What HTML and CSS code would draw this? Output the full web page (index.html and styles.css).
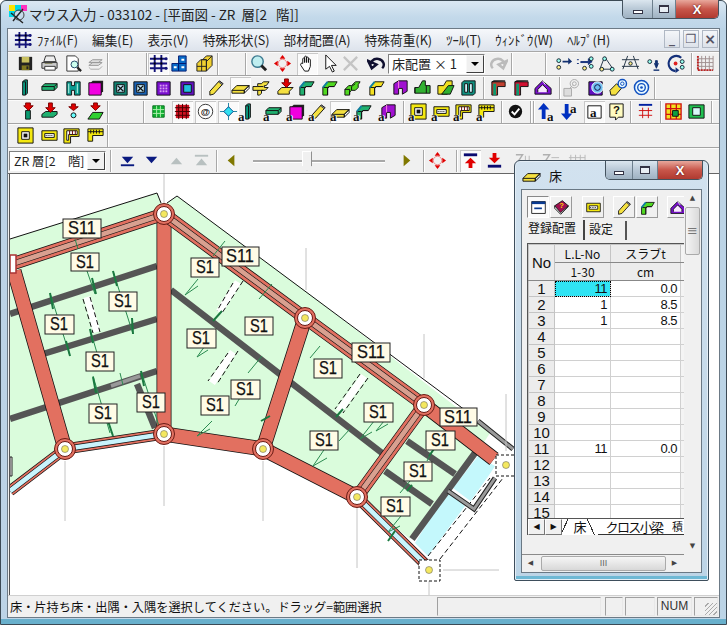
FILE: index.html
```html
<!DOCTYPE html>
<html lang="ja">
<head>
<meta charset="utf-8">
<title>マウス入力</title>
<link rel="stylesheet" href="styles.css">
</head>
<body>
<svg class="defs" width="0" height="0">
<defs>
<symbol id="appgrid" viewBox="0 0 20 20"><path d="M6 1v18M13 1v18M1 5h18M1 10h18M1 15h18" stroke="#14147a" stroke-width="2" fill="none"/><path d="M5 4h2v2H5zM12 4h2v2h-2zM5 9h2v2H5zM12 9h2v2h-2z" fill="#000"/><circle cx="18" cy="5" r="1.6" fill="#14147a"/><circle cx="18" cy="15" r="1.6" fill="#14147a"/></symbol>
<symbol id="floppy" viewBox="0 0 20 20"><path d="M3 3h14v14H3z" fill="#222"/><path d="M6 3h8v6H6z" fill="#c8c060"/><path d="M6 12h8v5H6z" fill="#807820"/><path d="M11 13h2v3h-2z" fill="#222"/></symbol>
<symbol id="print" viewBox="0 0 20 20"><path d="M6 2h9l2 6H4z" fill="#eee" stroke="#333"/><path d="M2 9h16v6H2z" fill="#ccc" stroke="#333"/><path d="M5 13h11v4H5z" fill="#fff" stroke="#333"/><path d="M5 10h8" stroke="#886" /></symbol>
<symbol id="preview" viewBox="0 0 20 20"><path d="M3 2h9l3 3v13H3z" fill="#fff" stroke="#333"/><circle cx="11" cy="11" r="3.6" fill="#cfe" stroke="#246"/><path d="M14 14l4 4" stroke="#222" stroke-width="2.4"/></symbol>
<symbol id="layers" viewBox="0 0 20 20"><path d="M3 12l4-3h10l-4 3zM3 9l4-3h10l-4 3z" fill="#ddd" stroke="#999"/><path d="M3 14l2 2h9l3-3" fill="none" stroke="#aaa"/></symbol>
<symbol id="steps" viewBox="0 0 20 20"><path d="M2 10h7v8H2zM9 10h8v8H9zM9 2h8v8H9z" fill="#0a6cc8" stroke="#001a70"/><path d="M4 13h3v2H4zM12 5h3v2h-3zM12 13h3v2h-3z" fill="#fff"/></symbol>
<symbol id="cubes" viewBox="0 0 20 20"><path d="M2 10l4-4h6v12H2zM8 6l4-4h6v10l-6 6V6z" fill="#f0d030" stroke="#222"/><path d="M2 13h10M7 6v12M12 8l6-6" stroke="#222" fill="none"/></symbol>
<symbol id="mag" viewBox="0 0 20 20"><circle cx="9" cy="8" r="6" fill="#bfeef0" stroke="#3c7a90" stroke-width="1.5"/><path d="M13 12l5 5" stroke="#222" stroke-width="3"/></symbol>
<symbol id="move" viewBox="0 0 20 20"><path d="M10 1l3 4H7zM10 19l-3-4h6zM1 10l4-3v6zM19 10l-4 3V7z" fill="#e00000"/><circle cx="10" cy="10" r="4.5" fill="none" stroke="#f08080"/></symbol>
<symbol id="hand" viewBox="0 0 20 20"><path d="M5 10V5c0-1 2-1 2 0v4V3c0-1 2-1 2 0v6V4c0-1 2-1 2 0v5V6c0-1 2-1 2 0v7l-2 5H7L3 12c-1-2 1-3 2-2z" fill="#fff" stroke="#111"/></symbol>
<symbol id="cursor" viewBox="0 0 20 20"><path d="M5 1v15l4-3 3 6 2-1-3-6h5z" fill="#fff" stroke="#111"/></symbol>
<symbol id="xx" viewBox="0 0 20 20"><path d="M3 3l14 14M17 3L3 17" stroke="#c4c4c4" stroke-width="2.4"/></symbol>
<symbol id="undo" viewBox="0 0 20 20"><path d="M4 13A7 6 0 1 1 16 15M1 7l4 8 5-4z" fill="none" stroke="#101030" stroke-width="2.6"/></symbol>
<symbol id="redo" viewBox="0 0 20 20"><path d="M16 13A7 6 0 1 0 4 15M19 7l-4 8-5-4z" fill="none" stroke="#bbb" stroke-width="2.6"/></symbol>
<symbol id="dot1" viewBox="0 0 20 20"><circle cx="5" cy="7" r="2" fill="#9fe" stroke="#123"/><circle cx="5" cy="14" r="2" fill="#fe8" stroke="#123"/><path d="M9 7h6V4l4 4-4 3V9H9z" fill="#123070"/></symbol>
<symbol id="dot2" viewBox="0 0 20 20"><path d="M1 6h2M1 10h2M5 8h8V5l4 3-4 3v-2H5z" fill="#14307a" stroke="#14307a"/><circle cx="16" cy="5" r="2" fill="#9fe" stroke="#123"/><circle cx="9" cy="15" r="2" fill="#fe8" stroke="#123"/><circle cx="16" cy="13" r="2" fill="#9fe" stroke="#123"/></symbol>
<symbol id="tri" viewBox="0 0 20 20"><path d="M8 3l9 13H3z" fill="none" stroke="#234"/><circle cx="8" cy="5" r="2" fill="#9fe" stroke="#123"/><circle cx="5" cy="16" r="2" fill="#fe8" stroke="#123"/><circle cx="16" cy="16" r="2" fill="#9fe" stroke="#123"/></symbol>
<symbol id="star" viewBox="0 0 20 20"><path d="M7 2L2 16M13 2l5 14M1 6h18M1 13h18" stroke="#234" fill="none"/><circle cx="10" cy="10" r="1.8" fill="#fe8" stroke="#123"/></symbol>
<symbol id="dotdn" viewBox="0 0 20 20"><circle cx="5" cy="8" r="2" fill="#9fe" stroke="#123"/><path d="M10 10h1V7h2v3h1l-2 5z" fill="#123070" stroke="#123070"/><path d="M9 17h6" stroke="#123070" stroke-width="1.5"/></symbol>
<symbol id="spin" viewBox="0 0 20 20"><path d="M15 4A8 8 0 1 0 9 18" fill="none" stroke="#14307a" stroke-width="2.2"/><path d="M9 14v6l4-3z" fill="#14307a"/><circle cx="9" cy="10" r="2" fill="#e02020"/><circle cx="16" cy="8" r="2" fill="#9fe" stroke="#123"/><circle cx="16" cy="14" r="2" fill="#9fe" stroke="#123"/></symbol>
<symbol id="redgrid" viewBox="0 0 20 20"><path d="M2 2v15h16M6 2v15M10 2v15M14 2v15M18 2v15M2 5h16M2 9h16M2 13h16" fill="none" stroke="#a09090"/><path d="M2 2v15h16" fill="none" stroke="#c02020" stroke-width="2" stroke-dasharray="2 1"/></symbol>
<symbol id="col" viewBox="0 0 20 20"><path d="M7 4l2-2h3v14l-2 2H7z" fill="currentColor" stroke="#111"/><path d="M7 4h3v14" fill="none" stroke="#111"/></symbol>
<symbol id="bar" viewBox="0 0 20 20"><path d="M2 9l3-3h13v4l-3 3H2z" fill="currentColor" stroke="#111"/><path d="M2 9h13v4M15 9l3-3" fill="none" stroke="#111"/></symbol>
<symbol id="hcol" viewBox="0 0 20 20"><path d="M3 4h5v4h3V4h6v14h-6v-5H8v5H3z" fill="#0a9a90" stroke="#111"/><path d="M5 6v10M14 6v10" stroke="#cfe"/></symbol>
<symbol id="sq" viewBox="0 0 20 20"><path d="M4 6l3-3h11v11l-3 3H4z" fill="#222"/><path d="M3 5h13v13H3z" fill="#f000e0" stroke="#111"/></symbol>
<symbol id="boxx" viewBox="0 0 20 20"><path d="M3 4h14v14H3z" fill="currentColor" stroke="#111"/><path d="M6 7h8v8H6z" fill="#bfe8f8" stroke="#111"/><path d="M7 8l6 6M13 8l-6 6" stroke="#111" stroke-width="1.4"/></symbol>
<symbol id="boxg" viewBox="0 0 20 20"><path d="M3 4h14v14H3z" fill="#7a10d0" stroke="#111"/><path d="M6 7h8v8H6z" fill="#d8a0f0"/><path d="M8.5 5v12M11.5 5v12M4 9.500h12M4 12.500h12" stroke="#7a10d0"/></symbol>
<symbol id="boxc" viewBox="0 0 20 20"><path d="M3 4h14v14H3z" fill="#6010c0" stroke="#111"/><path d="M6 7h8v8H6z" fill="#20c0e0" stroke="#111"/></symbol>
<symbol id="pencil" viewBox="0 0 20 20"><path d="M3 14l9-10 4 3-9 10-4 1z" fill="#f4e040" stroke="#111"/><path d="M12 4l1-1 4 3-1 1" fill="#888" stroke="#111"/></symbol>
<symbol id="slab" viewBox="0 0 20 20"><path d="M1 13l5-5h13l-5 5v3H1z" fill="#f4e040" stroke="#111"/><path d="M1 13h13l5-5M14 13v3l5-5V8" fill="none" stroke="#111"/></symbol>
<symbol id="cross" viewBox="0 0 20 20"><path d="M1 9h5V6h4l2-2h6l-3 4h-2v2h4l-3 3h-4v3l-2 2H6v-5H1z" fill="#f4e040" stroke="#111"/><path d="M6 9h6M6 13h6" fill="none" stroke="#111"/></symbol>
<symbol id="slabd" viewBox="0 0 20 20"><path d="M2 14l4-4h12l-4 4v3H2z" fill="#f4e040" stroke="#111"/><path d="M9 1h4v4h3l-5 5-5-5h3z" fill="#e00000" stroke="#700"/></symbol>
<symbol id="ell" viewBox="0 0 20 20"><path d="M3 10l5-6h10l-3 5H9l-1 2v7H3z" fill="currentColor" stroke="#111"/><path d="M3 10h5v8M8 11l2-2h5" fill="none" stroke="#111"/><path d="M3 10l5-6" stroke="#1080a0" stroke-width="2"/></symbol>
<symbol id="ell2" viewBox="0 0 20 20"><path d="M2 12l4-4h3l4-4h5l-2 3v3l-3 3H9l-2 2v3H2z" fill="currentColor" stroke="#111"/><path d="M2 12h5v5M9 13V9l4-3" fill="none" stroke="#111"/></symbol>
<symbol id="purp" viewBox="0 0 20 20"><path d="M3 6l5-3h9v11l-5 3v-6H8v6H3z" fill="#a010d0" stroke="#111"/><path d="M8 3v8" stroke="#f8d"/></symbol>
<symbol id="thumb" viewBox="0 0 20 20"><path d="M2 10h4l4-7h3v5h5v8H2z" fill="#30b030" stroke="#111"/><path d="M2 10v6M14 8v8" stroke="#111"/></symbol>
<symbol id="ygl" viewBox="0 0 20 20"><path d="M2 8h6l3-5h6v8l-5 6H2z" fill="#f0e020" stroke="#111"/><path d="M6 17l7-9h6l-4 9z" fill="#30b030" stroke="#111"/></symbol>
<symbol id="gbox" viewBox="0 0 20 20"><path d="M3 5l2-2h12v13l-2 2H3z" fill="#109080" stroke="#111"/><path d="M6 6h3v9H6zM11 6h3v9h-3z" fill="#d0f0f8" stroke="#111"/></symbol>
<symbol id="lred" viewBox="0 0 20 20"><path d="M3 4h14v5h-8v9H3z" fill="currentColor" stroke="#111"/><path d="M3 4l2-1h12" stroke="#111"/><path d="M6 6v12" stroke="#0a9a70" stroke-width="3"/></symbol>
<symbol id="roof" viewBox="0 0 20 20"><path d="M1 17V11L9 3l9 8v6z" fill="#7a10d0" stroke="#111"/><path d="M4 15v-3l5-5 5 5v3" fill="#f8e8ff" stroke="#111"/><path d="M9 3l3 4" stroke="#fff"/></symbol>
<symbol id="spgrey" viewBox="0 0 20 20"><path d="M2 11h8v8H2zM8 11l3-3" fill="#ddd" stroke="#aaa"/><circle cx="13" cy="6" r="4.4" fill="none" stroke="#aaa"/><circle cx="13" cy="6" r="2" fill="none" stroke="#aaa"/></symbol>
<symbol id="spbox" viewBox="0 0 20 20"><path d="M2 4h14v14H2z" fill="#6010c0" stroke="#111"/><circle cx="11" cy="10" r="6" fill="#70c0f0" stroke="#fff"/><circle cx="11" cy="10" r="3" fill="none" stroke="#114"/></symbol>
<symbol id="sppen" viewBox="0 0 20 20"><path d="M1 13l7-7 5 5-6 7H2z" fill="#f4e040" stroke="#111"/><circle cx="14" cy="6" r="4.4" fill="#e8f8ff" stroke="#1050c0" stroke-width="1.5"/><circle cx="14" cy="6" r="1.8" fill="none" stroke="#1050c0"/></symbol>
<symbol id="spiral" viewBox="0 0 20 20"><circle cx="10" cy="10" r="7.4" fill="#e8f8ff" stroke="#1050c0" stroke-width="1.6"/><circle cx="10" cy="10" r="4" fill="none" stroke="#1050c0" stroke-width="1.4"/><circle cx="10" cy="10" r="1.4" fill="#1050c0"/></symbol>
<symbol id="colr" viewBox="0 0 20 20"><path d="M8 9h5v9H8z" fill="#0a9a70" stroke="#111"/><path d="M8 1h5v3h3l-5 5-5-5h2z" fill="#e00000" stroke="#700"/></symbol>
<symbol id="barr" viewBox="0 0 20 20"><path d="M2 13l4-3h12v3l-4 3H2z" fill="#20b070" stroke="#111"/><path d="M9 1h4v5h3l-5 5-5-5h3z" fill="#e00000" stroke="#700"/></symbol>
<symbol id="dotr" viewBox="0 0 20 20"><path d="M8 2h4v3h3l-5 4-5-4h3z" fill="#e00000" stroke="#700"/><circle cx="10" cy="14" r="2.600" fill="#6ff" stroke="#111"/></symbol>
<symbol id="parar" viewBox="0 0 20 20"><path d="M2 18l5-7h11l-4 7z" fill="#30d030" stroke="#111"/><path d="M8 1h4v3h3l-5 5-5-5h3z" fill="#e00000" stroke="#700"/></symbol>
<symbol id="gtile" viewBox="0 0 20 20"><path d="M4 4h12v12H4z" fill="#10b030" stroke="#0a7020"/><path d="M8 4v12M12 4v12M4 8h12M4 12h12" stroke="#b0f0b0"/></symbol>
<symbol id="hash" viewBox="0 0 20 20"><path d="M3 3h14v14H3z" fill="#d01020"/><path d="M6 2v16M10 2v16M14 2v16M2 6h16M2 10h16M2 14h16" stroke="#400" /></symbol>
<symbol id="at" viewBox="0 0 20 20"><circle cx="10" cy="10" r="7.600" fill="#fff" stroke="#333"/><text x="10" y="14" class="att">@</text></symbol>
<symbol id="cyc" viewBox="0 0 20 20"><path d="M1 10h18M10 1v18" stroke="#2080a0"/><path d="M10 5l5 5-5 5-5-5z" fill="#30e0f0" stroke="#048"/></symbol>
<symbol id="f1" viewBox="0 0 20 20"><path d="M2 2h16v16H2z" fill="#f4e810" stroke="#111"/><path d="M6 6h8v8H6z" fill="#fff" stroke="#111"/><path d="M8 8h4v4H8z" fill="#111"/></symbol>
<symbol id="f2" viewBox="0 0 20 20"><path d="M2 5h16v10H2z" fill="#f4e810" stroke="#111"/><path d="M5 8h10v4H5z" fill="#fff" stroke="#111"/><path d="M6 10h8" stroke="#111" stroke-dasharray="1 1"/></symbol>
<symbol id="f3" viewBox="0 0 20 20"><path d="M2 3h16v8h-9v7H2z" fill="#f4e810" stroke="#111"/><path d="M5 5h11v4H7v6H5z" fill="#fff" stroke="#111"/><path d="M8 5v4M11 5v4M14 5v4" stroke="#600"/></symbol>
<symbol id="f4" viewBox="0 0 20 20"><path d="M2 3h16v7H7v6H2z" fill="#f4e810" stroke="#111"/><path d="M2 6h16" stroke="#111"/><path d="M5 4v4M8 4v4M11 4v4M14 4v4" stroke="#111"/></symbol>
<symbol id="check" viewBox="0 0 20 20"><circle cx="10" cy="10" r="7" fill="#111"/><path d="M6 10l3 3 5-6" fill="none" stroke="#fff" stroke-width="2"/></symbol>
<symbol id="upa" viewBox="0 0 20 20"><path d="M7 1l6 7H9v10H5V8H1z" fill="#0030c0"/></symbol>
<symbol id="dna" viewBox="0 0 20 20"><path d="M5 2h4v10h4l-6 7-6-7h4z" fill="#0030c0"/></symbol>
<symbol id="abox" viewBox="0 0 20 20"><path d="M3 4h14v13H3z" fill="#fff" stroke="#111"/></symbol>
<symbol id="qbox" viewBox="0 0 20 20"><path d="M3 2h14v14h-5l-3 3v-3H3z" fill="#fffbc0" stroke="#111"/><text x="10" y="13" class="q">?</text></symbol>
<symbol id="rline" viewBox="0 0 20 20"><path d="M3 3h14" stroke="#0020a0" stroke-width="2"/><path d="M3 9h14M3 14h14M7 6v11M13 6v11" stroke="#d01010"/></symbol>
<symbol id="rygrid" viewBox="0 0 20 20"><path d="M2 2h16v16H2z" fill="#f0e020"/><path d="M2 2h16v16H2zM7 2v16M13 2v16M2 7h16M2 13h16" fill="none" stroke="#d01010" stroke-width="1.4"/><path d="M9 9h6v6H9z" fill="#10a040" stroke="#111"/></symbol>
<symbol id="gframe" viewBox="0 0 20 20"><path d="M2 3h16v14H2z" fill="#20c050" stroke="#111"/><path d="M6 6h8v8H6z" fill="#d8f8f8" stroke="#111"/></symbol>
<symbol id="lvup" viewBox="0 0 20 20"><path d="M3 4h14" stroke="#0a0a70" stroke-width="3"/><path d="M10 7l6 6h-4v5H8v-5H4z" fill="#e00000"/></symbol>
<symbol id="lvdn" viewBox="0 0 20 20"><path d="M3 16h14" stroke="#0a0a70" stroke-width="3"/><path d="M8 2h4v5h4l-6 6-6-6h4z" fill="#e00000"/></symbol>
<symbol id="tdb" viewBox="0 0 20 20"><path d="M4 6h12l-6 7z" fill="currentColor"/><path d="M3 15h14" stroke="currentColor" stroke-width="2"/></symbol>
<symbol id="td" viewBox="0 0 20 20"><path d="M4 6h12l-6 7z" fill="currentColor"/></symbol>
<symbol id="tu" viewBox="0 0 20 20"><path d="M4 14h12l-6-7z" fill="currentColor"/></symbol>
<symbol id="tub" viewBox="0 0 20 20"><path d="M4 15h12l-6-7z" fill="currentColor"/><path d="M3 5h14" stroke="currentColor" stroke-width="2"/></symbol>
<symbol id="tl" viewBox="0 0 20 20"><path d="M13 4v12L6 10z" fill="currentColor"/></symbol>
<symbol id="tr" viewBox="0 0 20 20"><path d="M7 4v12l7-6z" fill="currentColor"/></symbol>
<symbol id="fad1" viewBox="0 0 20 20"><path d="M2 4h7L5 10l4 6H2" fill="none" stroke="#b0b0b0" stroke-width="1.500"/><path d="M12 5v11M16 5v11" stroke="#b8b8b8"/></symbol>
<symbol id="fad2" viewBox="0 0 20 20"><path d="M2 4h7L5 10l4 6H2" fill="none" stroke="#b0b0b0" stroke-width="1.500"/><path d="M11 7h8M11 12h8" stroke="#b8b8b8"/></symbol>
<symbol id="fad3" viewBox="0 0 20 20"><path d="M4 4v12M9 4v12M14 4v12M19 4v12M2 7h17" stroke="#b8b8b8"/></symbol>
<symbol id="cal" viewBox="0 0 20 20"><path d="M2 3h16v14H2z" fill="#fff" stroke="#111"/><path d="M2 3h16v3H2z" fill="#0a3a90"/><path d="M5 11h9" stroke="#0a3a90" stroke-width="2"/></symbol>
<symbol id="book" viewBox="0 0 20 20"><path d="M2 8l9-6 7 6-9 9z" fill="#a01050" stroke="#111"/><path d="M2 8v3l7 7 9-9V8L9 16z" fill="#eee" stroke="#111"/><text x="10" y="11" class="q2">?</text></symbol>
</defs>
</svg>

<div class="window">
  <header class="titlebar">
    <svg class="app-ic" viewBox="0 0 20 20"><path d="M1 1h6v6H1z" fill="#ffe400"/><path d="M7 1h6v6H7z" fill="#00d8e8"/><path d="M13 1h6v6h-6z" fill="#ff30c0"/><path d="M1 7h6v6H1z" fill="#00d8e8"/><path d="M3 9l12 10M15 5L5 17" stroke="#222" stroke-width="1.400"/><circle cx="11" cy="11" r="5" fill="none" stroke="#444"/></svg>
    <span class="title-text">マウス入力 - 033102 - [平面図 - ZR&nbsp; 層[2&nbsp;&nbsp; 階]]</span>
    <div class="caption">
      <span class="cap cap-min"><i class="g-min"></i></span><span class="cap cap-max"><i class="g-max"></i></span><span class="cap cap-close">X</span>
    </div>
  </header>
  <div class="frame">
    <nav class="menubar">
      <svg class="menu-ic"><use href="#appgrid"/></svg>
      <span class="mi">ﾌｧｲﾙ(F)</span><span class="mi">編集(E)</span><span class="mi">表示(V)</span><span class="mi">特殊形状(S)</span><span class="mi">部材配置(A)</span><span class="mi">特殊荷重(K)</span><span class="mi">ﾂｰﾙ(T)</span><span class="mi">ｳｨﾝﾄﾞｳ(W)</span><span class="mi">ﾍﾙﾌﾟ(H)</span>
      <div class="mdi"><span class="mdb">_</span><span class="mdb">&#10064;</span><span class="mdb mdb-x">×</span></div>
    </nav>

    <div class="tb">
      <span class="b ml7"><svg><use href="#floppy"/></svg></span>
      <span class="b ml4"><svg><use href="#print"/></svg></span>
      <span class="b ml4"><svg><use href="#preview"/></svg></span>
      <span class="b ml2"><svg><use href="#layers"/></svg></span>
      <i class="sep ml2"></i><i class="sep ml37"></i>
      <span class="b on"><svg><use href="#appgrid"/></svg></span>
      <span class="b ml1"><svg><use href="#steps"/></svg></span>
      <span class="b ml5"><svg><use href="#cubes"/></svg></span>
      <i class="sep ml3"></i><i class="sep ml26"></i>
      <span class="b ml1"><svg><use href="#mag"/></svg></span>
      <span class="b ml4"><svg><use href="#move"/></svg></span>
      <span class="b ml5 on"><svg><use href="#hand"/></svg></span>
      <span class="b ml3"><svg><use href="#cursor"/></svg></span>
      <span class="b"><svg><use href="#xx"/></svg></span>
      <span class="b ml6"><svg><use href="#undo"/></svg></span>
      <span class="combo ml2"><span class="combo-t">床配置 × 1</span><span class="combo-b"></span></span>
      <span class="b ml3"><svg><use href="#redo"/></svg></span>
      <i class="sep ml3"></i><i class="sep ml32"></i>
      <span class="b ml6"><svg><use href="#dot1"/></svg></span>
      <span class="b ml2"><svg><use href="#dot2"/></svg></span>
      <span class="b ml1"><svg><use href="#tri"/></svg></span>
      <span class="b ml4"><svg><use href="#star"/></svg></span>
      <span class="b ml4"><svg><use href="#dotdn"/></svg></span>
      <span class="b ml2"><svg><use href="#spin"/></svg></span>
      <i class="sep ml5"></i>
      <span class="b ml2"><svg><use href="#redgrid"/></svg></span>
    </div>

    <div class="tb">
      <span class="b ml7 c-teal"><svg><use href="#col"/></svg></span>
      <span class="b ml4 c-green"><svg><use href="#bar"/></svg></span>
      <span class="b ml4"><svg><use href="#hcol"/></svg></span>
      <span class="b ml2"><svg><use href="#sq"/></svg></span>
      <span class="b ml5 c-teal2"><svg><use href="#boxx"/></svg></span>
      <span class="b c-blue"><svg><use href="#boxx"/></svg></span>
      <span class="b ml3"><svg><use href="#boxg"/></svg></span>
      <span class="b ml4"><svg><use href="#boxc"/></svg></span>
      <i class="sep ml4"></i>
      <span class="b ml3"><svg><use href="#pencil"/></svg></span>
      <span class="b ml4 on"><svg><use href="#slab"/></svg></span>
      <span class="b ml1"><svg><use href="#cross"/></svg></span>
      <span class="b ml4"><svg><use href="#slabd"/></svg></span>
      <span class="b ml1 c-green"><svg><use href="#ell"/></svg></span>
      <span class="b ml3 c-lime"><svg><use href="#ell"/></svg></span>
      <span class="b ml3 c-lime"><svg><use href="#ell2"/></svg></span>
      <span class="b ml4 c-yellow"><svg><use href="#ell"/></svg></span>
      <span class="b ml4"><svg><use href="#purp"/></svg></span>
      <span class="b ml2"><svg><use href="#thumb"/></svg></span>
      <span class="b ml3"><svg><use href="#ygl"/></svg></span>
      <span class="b ml3"><svg><use href="#gbox"/></svg></span>
      <i class="sep ml5"></i>
      <span class="b ml3 c-red2"><svg><use href="#lred"/></svg></span>
      <span class="b ml3 c-red"><svg><use href="#lred"/></svg></span>
      <span class="b ml2"><svg><use href="#roof"/></svg></span>
      <i class="sep ml6"></i>
      <span class="b"><svg><use href="#spgrey"/></svg></span>
      <span class="b ml5"><svg><use href="#spbox"/></svg></span>
      <span class="b ml2"><svg><use href="#sppen"/></svg></span>
      <span class="b ml3"><svg><use href="#spiral"/></svg></span>
      <i class="sep ml3"></i>
    </div>

    <div class="tb">
      <span class="b ml9"><svg><use href="#colr"/></svg></span>
      <span class="b ml2"><svg><use href="#barr"/></svg></span>
      <span class="b ml4"><svg><use href="#dotr"/></svg></span>
      <span class="b ml2"><svg><use href="#parar"/></svg></span>
      <i class="sep ml2"></i><i class="sep ml34"></i>
      <span class="b ml3"><svg><use href="#gtile"/></svg></span>
      <span class="b ml4 on"><svg><use href="#hash"/></svg></span>
      <span class="b ml3 on"><svg><use href="#at"/></svg></span>
      <span class="b ml3 on"><svg><use href="#cyc"/></svg></span>
      <span class="b c-teal"><svg><use href="#col"/></svg><em class="a">a</em></span>
      <span class="b ml5 c-green"><svg><use href="#bar"/></svg><em class="a">a</em></span>
      <span class="b ml3"><svg><use href="#sq"/></svg><em class="a">a</em></span>
      <span class="b ml2"><svg><use href="#pencil"/></svg><em class="a">a</em></span>
      <span class="b ml2 on"><svg><use href="#slab"/></svg><em class="a">a</em></span>
      <span class="b ml3 c-green"><svg><use href="#ell"/></svg><em class="a">a</em></span>
      <span class="b ml5"><svg><use href="#purp"/></svg><em class="a">a</em></span>
      <i class="sep ml5"></i>
      <span class="b ml3"><svg><use href="#f1"/></svg><em class="a">a</em></span>
      <span class="b ml3"><svg><use href="#f2"/></svg><em class="a">a</em></span>
      <span class="b ml2"><svg><use href="#f3"/></svg><em class="a">a</em></span>
      <span class="b ml3"><svg><use href="#f4"/></svg><em class="a">a</em></span>
      <i class="sep ml5"></i>
      <span class="b ml2"><svg><use href="#check"/></svg></span>
      <i class="sep ml5"></i><i class="sep ml1"></i>
      <span class="b ml1"><svg><use href="#upa"/></svg><em class="a a-low">a</em></span>
      <span class="b ml3"><svg><use href="#dna"/></svg><em class="a a-top">a</em></span>
      <span class="b ml5 on"><svg><use href="#abox"/></svg><em class="a a-mid">a</em></span>
      <span class="b ml2"><svg><use href="#qbox"/></svg></span>
      <i class="sep ml4"></i>
      <span class="b ml3"><svg><use href="#rline"/></svg></span>
      <i class="sep ml5"></i>
      <span class="b ml1"><svg><use href="#rygrid"/></svg></span>
      <span class="b ml3"><svg><use href="#gframe"/></svg></span>
      <i class="sep ml5"></i>
    </div>

    <div class="tb">
      <span class="b ml7"><svg><use href="#f1"/></svg></span>
      <span class="b ml4"><svg><use href="#f2"/></svg></span>
      <span class="b ml2"><svg><use href="#f3"/></svg></span>
      <span class="b ml4"><svg><use href="#f4"/></svg></span>
      <i class="sep ml2"></i>
    </div>

    <div class="tb tb-last">
      <span class="combo combo-lv ml1"><span class="combo-t">ZR 層[2　階]</span><span class="combo-b"></span></span>
      <i class="sep ml4"></i>
      <span class="b ml5 c-navy"><svg><use href="#tdb"/></svg></span>
      <span class="b ml4 c-navy"><svg><use href="#td"/></svg></span>
      <span class="b ml5 c-mute"><svg><use href="#tu"/></svg></span>
      <span class="b ml5 c-mute"><svg><use href="#tub"/></svg></span>
      <i class="sep ml5"></i>
      <span class="b ml3 c-olive"><svg><use href="#tl"/></svg></span>
      <span class="slider ml12"><i class="thumb"></i></span>
      <span class="b ml11 c-olive"><svg><use href="#tr"/></svg></span>
      <i class="sep ml7"></i>
      <span class="b ml2"><svg><use href="#move"/></svg></span>
      <i class="sep ml9"></i>
      <span class="b ml2 on"><svg><use href="#lvup"/></svg></span>
      <span class="b ml4"><svg><use href="#lvdn"/></svg></span>
      <span class="b ml9"><svg><use href="#fad1"/></svg></span>
      <span class="b ml7"><svg><use href="#fad2"/></svg></span>
      <span class="b ml6"><svg><use href="#fad3"/></svg></span>
    </div>

    <main class="canvas">
      <svg class="plan" viewBox="10 173 707 424">
        <defs>
          <path id="solid" d="M14 270L65 448M164 213V433M305 317L263 448M263 448L164 433M263 448L357 496M424 404L494 458"/>
          <path id="strip" d="M12 263L164 213M164 213L305 317L424 404M424 404L357 496"/>
          <path id="blue" d="M65 448L10 490M65 448L164 433M357 496L425 563"/>
        </defs>
        <path class="slab" d="M10 238L157 192L161 202L167 202L177 195L316 298L490 432L477 452L410 538L357 496L263 448L164 433L65 448L10 490Z"/>
        <path class="outline" d="M10 238L157 192L161 202M167 202L177 195L477 418"/>
        <path class="cyan" d="M478 455L495 465L473 502L453 487ZM447 490L465 505L428 555L415 542Z"/>
        <path class="gap" d="M87 296L97 331M238 281L219 311M233 351L212 382M364 375L339 410"/>
        <path class="gapw" d="M437 558L500 469"/>
        <path class="dash" d="M83 298L93 332M90 296L100 331M233 282L217 310M243 280L222 312M228 352L208 380M238 350L217 383M360 373L335 408M368 377L343 412M428 555L490 477M440 558L503 477"/>
        <path class="gbeam" d="M10 313L157 265M43 353L157 318M10 418L157 370M137 383L155 427M171 289L382 452M385 470L432 503M407 440L455 473M475 452L412 538"/>
        <path class="lbeam" d="M111 385L140 375"/>
        <path class="tbeam-o" d="M448 490L474 508L495 477M478 420L513 448"/>
        <path class="tbeam" d="M448 490L474 508L495 477M478 420L513 448"/>

        <use href="#solid" class="bk15"/><use href="#solid" class="rd13"/>
        <use href="#strip" class="bk13"/><use href="#strip" class="rd11"/><use href="#strip" class="bk6"/><use href="#strip" class="pk5"/>
        <use href="#blue" class="bk11"/><use href="#blue" class="rd9"/><use href="#blue" class="bk6"/><use href="#blue" class="bl5"/>
        <path class="whitebox" d="M10 254h6v18h-6z"/>
        <path class="whitebox2" d="M10 456h2v19h-2z"/>

        <path class="guide" d="M164 173V205M164 445V505M65 460V520M263 460V520M357 506V567M424 333V377M306 247V289M506 393V450M429 578V597M443 569H499"/>

        <path class="gr" d="M75 238L78 248M87 270L95 293M113 270L133 333M50 292L70 355M90 328L97 352M93 375L110 432M120 372L123 384M141 370L160 428M225 240L213 255M185 294L198 278M185 294L198 285M197 356L212 335M197 356L208 349M259 298L272 283M250 380L235 405M248 372L262 355M197 435L212 420M197 435L210 428M313 465L330 440M313 465L327 457M339 440L350 428M310 357L320 345M360 438L378 415M360 438L372 431M376 430L392 410M376 430L388 423M388 531L405 510M388 531L400 525M427 460L435 445M400 492L410 480"/>
        <path class="gr2" d="M50 292L53 308M66 340L70 355M92 277L96 293M113 270L117 285M132 317L133 333M90 328L93 342M93 376L96 392M108 420L113 435M141 370L144 385M158 428L162 442M213 320L222 310M261 420L270 415M336 416L343 408M395 530L388 540M429 455L434 448M407 490L412 484"/>

        <g class="node"><circle cx="164" cy="213" r="10.500"/><circle cx="164" cy="213" r="7.500" class="nw"/><circle cx="164" cy="213" r="3.500" class="ny"/></g>
        <g class="node"><circle cx="65" cy="448" r="10.500"/><circle cx="65" cy="448" r="7.500" class="nw"/><circle cx="65" cy="448" r="3.500" class="ny"/></g>
        <g class="node"><circle cx="164" cy="433" r="10.500"/><circle cx="164" cy="433" r="7.500" class="nw"/><circle cx="164" cy="433" r="3.500" class="ny"/></g>
        <g class="node"><circle cx="263" cy="448" r="10.500"/><circle cx="263" cy="448" r="7.500" class="nw"/><circle cx="263" cy="448" r="3.500" class="ny"/></g>
        <g class="node"><circle cx="305" cy="317" r="10.500"/><circle cx="305" cy="317" r="7.500" class="nw"/><circle cx="305" cy="317" r="3.500" class="ny"/></g>
        <g class="node"><circle cx="424" cy="404" r="10.500"/><circle cx="424" cy="404" r="7.500" class="nw"/><circle cx="424" cy="404" r="3.500" class="ny"/></g>
        <g class="node"><circle cx="357" cy="496" r="10.500"/><circle cx="357" cy="496" r="7.500" class="nw"/><circle cx="357" cy="496" r="3.500" class="ny"/></g>
        <rect class="sqn" x="419" y="559" width="21" height="21"/><circle class="ny2" cx="429" cy="569" r="3.500"/>
        <rect class="sqn" x="496" y="454" width="21" height="21"/><circle class="ny2" cx="506" cy="464" r="3.500"/>

        <g class="lab">
          <rect x="63" y="218" width="38" height="19"/><text x="82" y="233" textLength="28" lengthAdjust="spacingAndGlyphs">S11</text>
          <rect x="71" y="252" width="28" height="18"/><text x="85" y="267" textLength="18" lengthAdjust="spacingAndGlyphs">S1</text>
          <rect x="109" y="291" width="28" height="19"/><text x="123" y="306" textLength="18" lengthAdjust="spacingAndGlyphs">S1</text>
          <rect x="45" y="314" width="29" height="19"/><text x="59" y="329" textLength="18" lengthAdjust="spacingAndGlyphs">S1</text>
          <rect x="86" y="351" width="28" height="19"/><text x="100" y="366" textLength="18" lengthAdjust="spacingAndGlyphs">S1</text>
          <rect x="89" y="403" width="28" height="19"/><text x="103" y="418" textLength="18" lengthAdjust="spacingAndGlyphs">S1</text>
          <rect x="137" y="392" width="28" height="19"/><text x="151" y="407" textLength="18" lengthAdjust="spacingAndGlyphs">S1</text>
          <rect x="191" y="257" width="28" height="19"/><text x="205" y="272" textLength="18" lengthAdjust="spacingAndGlyphs">S1</text>
          <rect x="222" y="246" width="37" height="19"/><text x="240" y="261" textLength="28" lengthAdjust="spacingAndGlyphs">S11</text>
          <rect x="245" y="316" width="28" height="18"/><text x="259" y="331" textLength="18" lengthAdjust="spacingAndGlyphs">S1</text>
          <rect x="187" y="328" width="29" height="19"/><text x="201" y="343" textLength="18" lengthAdjust="spacingAndGlyphs">S1</text>
          <rect x="231" y="379" width="29" height="19"/><text x="245" y="394" textLength="18" lengthAdjust="spacingAndGlyphs">S1</text>
          <rect x="201" y="395" width="28" height="19"/><text x="215" y="410" textLength="18" lengthAdjust="spacingAndGlyphs">S1</text>
          <rect x="314" y="358" width="28" height="19"/><text x="328" y="373" textLength="18" lengthAdjust="spacingAndGlyphs">S1</text>
          <rect x="352" y="342" width="38" height="19"/><text x="371" y="357" textLength="28" lengthAdjust="spacingAndGlyphs">S11</text>
          <rect x="364" y="402" width="29" height="19"/><text x="378" y="417" textLength="18" lengthAdjust="spacingAndGlyphs">S1</text>
          <rect x="310" y="430" width="28" height="19"/><text x="324" y="445" textLength="18" lengthAdjust="spacingAndGlyphs">S1</text>
          <rect x="426" y="430" width="29" height="19"/><text x="440" y="445" textLength="18" lengthAdjust="spacingAndGlyphs">S1</text>
          <rect x="440" y="407" width="37" height="18"/><text x="458" y="422" textLength="28" lengthAdjust="spacingAndGlyphs">S11</text>
          <rect x="404" y="461" width="28" height="19"/><text x="418" y="476" textLength="18" lengthAdjust="spacingAndGlyphs">S1</text>
          <rect x="381" y="496" width="29" height="19"/><text x="395" y="511" textLength="18" lengthAdjust="spacingAndGlyphs">S1</text>
        </g>
      </svg>
    </main>

    <footer class="status">
      <span class="st-text">床・片持ち床・出隅・入隅を選択してください。ドラッグ=範囲選択</span>
      <span class="pane p1"></span><span class="pane p2"></span><span class="pane p3"></span><span class="pane p4">NUM</span><span class="pane p5"></span>
    </footer>
  </div>

  <section class="palette">
    <header class="pal-title">
      <svg class="pal-ic"><use href="#slab"/></svg>
      <span class="pal-name">床</span>
      <div class="pal-caption"><span class="cap cap-min"><i class="g-min"></i></span><span class="cap cap-max"><i class="g-max"></i></span><span class="cap cap-close">X</span></div>
    </header>
    <div class="pal-client">
      <div class="pal-top">
        <div class="pal-body">
          <div class="pal-tools">
            <span class="pb on"><svg><use href="#cal"/></svg></span>
            <span class="pb"><svg><use href="#book"/></svg></span>
            <span class="pb pb-g1"><svg><use href="#f2"/></svg></span>
            <span class="pb pb-g2"><svg><use href="#pencil"/></svg></span>
            <span class="pb c-lime"><svg><use href="#ell"/></svg></span>
            <span class="pb pb-g2"><svg><use href="#roof"/></svg></span>
          </div>
          <div class="pal-tabs">
            <span class="ptab ptab-on">登録配置</span><span class="ptab">設定</span>
          </div>
          <div class="grid-wrap">
            <table class="sheet">
              <thead>
                <tr><th rowspan="2" class="no no-h">No</th><th>L.L-No</th><th>スラブt</th><th class="rest"></th></tr>
                <tr><th>1-30</th><th>cm</th><th class="rest"></th></tr>
              </thead>
              <tbody>
                <tr><th class="no">1</th><td class="sel">11</td><td>0.0</td><td class="rest"></td></tr>
                <tr><th class="no">2</th><td>1</td><td>8.5</td><td class="rest"></td></tr>
                <tr><th class="no">3</th><td>1</td><td>8.5</td><td class="rest"></td></tr>
                <tr><th class="no">4</th><td></td><td></td><td class="rest"></td></tr>
                <tr><th class="no">5</th><td></td><td></td><td class="rest"></td></tr>
                <tr><th class="no">6</th><td></td><td></td><td class="rest"></td></tr>
                <tr><th class="no">7</th><td></td><td></td><td class="rest"></td></tr>
                <tr><th class="no">8</th><td></td><td></td><td class="rest"></td></tr>
                <tr><th class="no">9</th><td></td><td></td><td class="rest"></td></tr>
                <tr><th class="no">10</th><td></td><td></td><td class="rest"></td></tr>
                <tr><th class="no">11</th><td>11</td><td>0.0</td><td class="rest"></td></tr>
                <tr><th class="no">12</th><td></td><td></td><td class="rest"></td></tr>
                <tr><th class="no">13</th><td></td><td></td><td class="rest"></td></tr>
                <tr><th class="no">14</th><td></td><td></td><td class="rest"></td></tr>
                <tr><th class="no">15</th><td></td><td></td><td class="rest"></td></tr>
              </tbody>
            </table>
          </div>
          <div class="sheet-tabs">
            <span class="nav">◀</span><span class="nav">▶</span>
            <span class="stab stab-on">床</span><span class="stab stab-x">クロス小梁</span><span class="stab stab-y">積</span>
          </div>
        </div>
        <div class="vscroll"><span class="sa">▲</span><span class="sthumb">≡</span><span class="sa sa-b">▼</span></div>
      </div>
      <div class="hscroll"><span class="sa">◀</span><span class="hthumb">III</span><span class="sa">▶</span><span class="hgrip"></span></div>
    </div>
  </section>
</div>
</body>
</html>
```
FILE: styles.css
```css
* { box-sizing: border-box; }
html, body { margin: 0; padding: 0; width: 727px; height: 625px; overflow: hidden; background: #fff; }
body { font-family: "Noto Sans CJK JP", "Liberation Sans", sans-serif; font-size: 12px; color: #111; }
.defs { position: absolute; }
.att { font: bold 10px "Liberation Sans", sans-serif; text-anchor: middle; fill: #111; }
.q { font: bold 12px "Liberation Sans", sans-serif; text-anchor: middle; fill: #111; }
.q2 { font: bold 9px "Liberation Sans", sans-serif; text-anchor: middle; fill: #fc0; }

.window { position: relative; width: 727px; height: 625px; display: flex; flex-direction: column; background: linear-gradient(0deg, #69b0cc 0 5px, transparent 5px), linear-gradient(90deg, #bcd3e6, #cfe0ee 40%, #bcd4e6); border: 1px solid #3c4a55; border-radius: 6px 6px 0 0; }
.titlebar { height: 27px; flex: none; display: flex; align-items: center; padding-left: 7px; background: linear-gradient(180deg, #dbe8f3, #c3d9ea 60%, #bed5e8); border-radius: 6px 6px 0 0; position: relative; }
.app-ic { width: 20px; height: 20px; flex: none; margin-top: -1px; }
.title-text { margin-left: 1px; font-size: 13.5px; color: #222; white-space: nowrap; margin-top: -1px; }
.caption { margin-left: auto; margin-right: 7px; height: 19px; display: flex; align-self: flex-start; margin-top: -1px; border: 1px solid #44535f; border-top: 0; border-radius: 0 0 5px 5px; overflow: hidden; }
.cap { display: flex; align-items: center; justify-content: center; height: 100%; background: linear-gradient(180deg, #dbe6ef, #b8c8d6 50%, #9fb2c2); border-right: 1px solid #6d7f8d; }
.cap-min { width: 30px; }
.cap-max { width: 23px; }
.cap-close { width: 42px; border-right: 0; background: linear-gradient(180deg, #e8a89c, #c8564a 50%, #b03a30); color: #fff; font: bold 13px "Liberation Sans", sans-serif; text-shadow: 0 0 2px #400; }
.g-min { display: block; width: 10px; height: 4px; margin-top: 6px; background: #fff; border: 1px solid #334; }
.g-max { display: block; width: 10px; height: 8px; border: 1px solid #334; border-top-width: 2px; background: #e8eef4; }

.frame { flex: 1; min-height: 0; margin: 0 6px 6px; border: 1px solid #6c7a86; background: #f0f0f0; display: flex; flex-direction: column; }
.menubar { height: 23px; flex: none; display: flex; align-items: center; position: relative; background: linear-gradient(180deg, #f6f8fb, #dde3ec); border-bottom: 1px solid #a8a8a8; padding-left: 6px; }
.menu-ic { width: 18px; height: 18px; flex: none; margin-right: 5px; }
.mi { margin-right: 14px; white-space: nowrap; font-size: 12.7px; color: #222; line-height: 22px; }
.mdi { position: absolute; right: 1px; top: 1px; display: flex; gap: 3px; }
.mdb { width: 16px; height: 18px; display: flex; align-items: center; justify-content: center; background: linear-gradient(180deg, #f4f6f9, #dde2ea); border: 1px solid #b0b8c4; color: #556; font-size: 12px; font-weight: bold; font-family: "DejaVu Sans", sans-serif; line-height: 1; }
.mdb-x { font-size: 14px; }

.tb { height: 24px; flex: none; display: flex; align-items: center; background: #f0f0f0; border-bottom: 1px solid #a4a4a4; box-shadow: inset 0 1px 0 #fbfbfb; }
.tb-last { height: 26px; border-bottom: 1px solid #666; }
.b { position: relative; flex: none; width: 20px; height: 22px; display: flex; align-items: center; justify-content: center; }
.b svg { width: 19px; height: 19px; display: block; overflow: visible; }
.b.on { background: #fafafa; box-shadow: inset 1px 1px 0 #c8c8c8, inset -1px -1px 0 #fff; margin-right: -1px; padding-right: 1px; width: 21px; }
.sep { flex: none; width: 2px; height: 22px; border-left: 1px solid #a8a8a8; border-right: 1px solid #fff; }
.a { position: absolute; left: 0; bottom: 0; font: bold 13px/13px "Liberation Serif", serif; color: #111; text-shadow: 0 0 1px #fff, 1px 0 0 #fff; }
.a-low { left: 11px; }
.a-top { left: 11px; top: 1px; bottom: auto; }
.a-mid { left: 6px; bottom: 4px; }

.ml1 { margin-left: 1px; } .ml2 { margin-left: 2px; } .ml3 { margin-left: 3px; } .ml4 { margin-left: 4px; } .ml5 { margin-left: 5px; } .ml6 { margin-left: 6px; } .ml7 { margin-left: 7px; } .ml9 { margin-left: 9px; } .ml11 { margin-left: 11px; } .ml12 { margin-left: 12px; } .ml26 { margin-left: 26px; } .ml32 { margin-left: 32px; } .ml34 { margin-left: 34px; } .ml37 { margin-left: 37px; }

.c-teal { color: #0a9a80; } .c-green { color: #20b070; } .c-teal2 { color: #108070; } .c-blue { color: #1860b0; } .c-lime { color: #50d820; } .c-yellow { color: #f4e020; } .c-red { color: #d01030; } .c-red2 { color: #c04030; } .c-navy { color: #0a1a80; } .c-mute { color: #b8c0c0; } .c-olive { color: #807800; }

.combo { flex: none; width: 97px; height: 20px; display: flex; align-items: stretch; background: #fff; border: 1px solid; border-color: #808080 #fff #fff #808080; }
.combo-t { flex: 1; min-width: 0; padding-left: 3px; font-size: 13px; line-height: 18px; color: #222; white-space: nowrap; }
.combo-lv .combo-t { padding-left: 4px; font-size: 12.4px; }
.combo-b { flex: none; width: 18px; position: relative; background: #f0f0f0; border: 1px solid; border-color: #f8f8f8 #404040 #404040 #f8f8f8; }
.combo-b::after { content: ""; position: absolute; left: 4px; top: 6px; border: 4px solid transparent; border-top: 4px solid #000; border-bottom: 0; }

.slider { flex: none; position: relative; width: 132px; height: 22px; }
.slider::before { content: ""; position: absolute; left: 0; right: 0; top: 10px; height: 2px; background: #a8a8a8; border-bottom: 1px solid #fff; }
.thumb { position: absolute; left: 49px; top: 1px; width: 10px; height: 20px; background: #f0f0f0; border: 1px solid; border-color: #fff #909090 #909090 #fff; clip-path: polygon(0 0, 100% 0, 100% 75%, 50% 100%, 0 75%); }

.canvas { flex: 1; min-height: 0; background: #fff; border-left: 1px solid #555; margin-left: 1px; }
.plan { display: block; width: 707px; height: 424px; }
.slab { fill: #dafcdc; }
.outline { fill: none; stroke: #111; stroke-width: 1; }
.cyan { fill: #c4f8fc; }
.gap { fill: none; stroke: #fff; stroke-width: 7; }
.gapw { fill: none; stroke: #fff; stroke-width: 12; }
.dash { fill: none; stroke: #111; stroke-width: 1; stroke-dasharray: 5 3; }
.gbeam { fill: none; stroke: #555; stroke-width: 6.5; }
.lbeam { fill: none; stroke: #999; stroke-width: 3.5; }
.tbeam-o { fill: none; stroke: #222; stroke-width: 5; }
.tbeam { fill: none; stroke: #9a9a9a; stroke-width: 3; }
.bk15, .bk13, .bk11, .bk6, .rd13, .rd11, .rd9, .pk5, .bl5 { fill: none; stroke-linecap: butt; }
.bk15 { stroke: #111; stroke-width: 15; } .rd13 { stroke: #e27060; stroke-width: 13.5; }
.bk13 { stroke: #111; stroke-width: 13; } .rd11 { stroke: #e27060; stroke-width: 11.5; }
.bk11 { stroke: #111; stroke-width: 11; } .rd9 { stroke: #e27060; stroke-width: 9.5; }
.bk6 { stroke: #111; stroke-width: 6; } .pk5 { stroke: #d8a090; stroke-width: 4.8; } .bl5 { stroke: #c8f4fc; stroke-width: 4.8; }
.whitebox { fill: #fff; stroke: #a33; stroke-width: 1.5; }
.whitebox2 { fill: #fff; stroke: #222; stroke-width: 1; }
.guide { fill: none; stroke: #c4c4c4; stroke-width: 1; }
.gr { fill: none; stroke: #2a8a50; stroke-width: 1; }
.gr2 { fill: none; stroke: #1a7a40; stroke-width: 2; }
.node circle { fill: #e27060; stroke: #6a1a14; stroke-width: 1; }
.node .nw { fill: #fff; stroke: #6a1a14; }
.node .ny { fill: #f4e860; stroke: #555; stroke-width: .5; }
.sqn { fill: #fff; stroke: #111; stroke-width: 1; stroke-dasharray: 3 2; }
.ny2 { fill: #f4e860; stroke: #555; stroke-width: .5; }
.lab rect { fill: #fffbe6; stroke: #222; stroke-width: 1; }
.lab text { font: 18px "Liberation Sans", sans-serif; text-anchor: middle; fill: #111; stroke: #111; stroke-width: .25; }

.status { height: 22px; flex: none; position: relative; display: flex; align-items: center; gap: 2px; background: #f0f0f0; border-top: 1px solid #d0d0d0; padding-left: 2px; }
.st-text { width: 425px; flex: none; font-size: 12.2px; color: #111; white-space: nowrap; }
.pane { flex: none; height: 19px; border: 1px solid; border-color: #a0a0a0 #e8e8e8 #e8e8e8 #a0a0a0; font-size: 12px; line-height: 17px; text-align: center; }
.p1 { width: 164px; } .p2 { width: 18px; margin-left: 2px; } .p3 { width: 30px; } .p4 { width: 35px; color: #333; font-family: "Liberation Sans", sans-serif; } .p5 { width: 24px; background: repeating-linear-gradient(135deg, transparent 0 2px, #aaa 2px 3px) right bottom / 12px 12px no-repeat; }

.palette { position: absolute; left: 513px; top: 159px; width: 195px; height: 421px; display: flex; flex-direction: column; background: linear-gradient(180deg, #d2e2ef, #bcd4e6); border: 1px solid #3e4e5c; border-radius: 6px 6px 2px 2px; box-shadow: inset 0 0 0 1px #e4eef6, inset 0 -4px 0 #6eb8d4; padding: 0 6px 7px; }
.pal-title { height: 28px; flex: none; position: relative; display: flex; align-items: center; margin: 0 -6px; padding-left: 7px; }
.pal-ic { width: 19px; height: 19px; flex: none; }
.pal-name { margin-left: 8px; font-size: 13px; color: #111; }
.pal-caption { position: absolute; left: 90px; right: 5px; top: 0; height: 19px; display: flex; border: 1px solid #44535f; border-top: 0; border-radius: 0 0 5px 5px; overflow: hidden; }
.pal-caption .cap-min { width: 27px; } .pal-caption .cap-max { width: 25px; } .pal-caption .cap-close { flex: 1; }
.pal-client { flex: 1; min-height: 0; display: flex; flex-direction: column; background: #f0f0f0; border: 1px solid #6a7884; }
.pal-top { flex: 1; min-height: 0; display: flex; }
.pal-body { flex: 1; min-width: 0; overflow: hidden; padding: 6px 0 0 5px; border-bottom: 1px solid #8a8a8a; }
.pal-tools { height: 22px; display: flex; align-items: center; white-space: nowrap; }
.pb { flex: none; width: 22px; height: 22px; display: flex; align-items: center; justify-content: center; background: #f0f0f0; border: 1px solid; border-color: #fff #999 #999 #fff; margin-right: 1px; }
.pb.on { background: #fafafa; border-color: #888 #fff #fff #888; }
.pb svg { width: 17px; height: 17px; display: block; }
.pb-g1 { margin-left: 9px; } .pb-g2 { margin-left: 8px; }
.pal-tabs { height: 20px; margin-top: 2px; display: flex; align-items: flex-end; font-size: 12px; }
.ptab { height: 19px; line-height: 16px; border-right: 1px solid #555; }
.ptab-on { padding: 0 7px 0 1px; border-right: 2px solid #444; height: 20px; }
.ptab + .ptab { padding: 0 12px 0 4px; border-right: 2px solid #555; }
.grid-wrap { height: 275px; margin-top: 3px; overflow: hidden; background: #fff; border-top: 1px solid #555; border-left: 1px solid #555; }
.sheet { border-collapse: collapse; table-layout: fixed; width: 156px; font-family: "Liberation Sans", sans-serif; font-size: 12px; }
.sheet th, .sheet td { height: 16px; padding: 0; border: 1px solid #d0d0d0; overflow: hidden; white-space: nowrap; line-height: 14px; }
.sheet th { background: #ececec; font-weight: normal; text-align: center; border-color: #c4c4c4; font-family: "Noto Sans CJK JP", sans-serif; }
.sheet thead th { height: 18px; border-bottom-color: #888; width: 56px; }
.sheet thead th:nth-child(3) { width: 70px; }
.sheet th.no { width: 26px; font-family: "Liberation Sans", sans-serif; font-size: 15px; }
.sheet .no-h { font-size: 17px; }
.sheet td { text-align: right; padding-right: 3px; background: #fff; letter-spacing: -.5px; font-size: 13px; }
.sheet .rest, .sheet th.rest { width: 4px; padding: 0; border-right: 0; background: #f4f4f4; }
.sheet td.sel { background: #30e4f4; outline: 1px dotted #000; outline-offset: -1px; }
.sheet-tabs { height: 17px; display: flex; align-items: center; background: #fff; border: 1px solid #555; border-width: 1px 0 0 1px; white-space: nowrap; overflow: hidden; }
.nav { flex: none; width: 17px; height: 16px; background: #f0f0f0; border: 1px solid; border-color: #fff #777 #777 #fff; font-size: 8px; line-height: 14px; text-align: center; font-family: "DejaVu Sans", sans-serif; }
.stab { flex: none; font-size: 13px; line-height: 15px; height: 16px; position: relative; }
.stab-on { width: 36px; text-align: center; background-color: #fff; background-image: linear-gradient(115deg, transparent 5px, #333 5px, #333 6px, transparent 6px), linear-gradient(65deg, transparent 29px, #333 29px, #333 30px, transparent 30px); }
.stab-x { width: 72px; text-align: center; letter-spacing: -1.6px; background: #fff; border-bottom: 1px solid #333; }
.stab-y { padding-left: 2px; width: 20px; font-size: 11px; background: #fff; border-bottom: 1px solid #333; }
.vscroll { width: 17px; flex: none; display: flex; flex-direction: column; background: #f0f0f0; }
.sa { flex: none; width: 17px; height: 17px; font-size: 7px; line-height: 17px; text-align: center; color: #444; font-family: "DejaVu Sans", sans-serif; }
.sa-b { margin-top: auto; }
.sthumb { height: 48px; flex: none; margin: 0 1px; background: linear-gradient(90deg, #f4f4f4, #dadada); border: 1px solid #aaa; border-radius: 2px; text-align: center; line-height: 46px; color: #777; font-size: 13px; font-family: "DejaVu Sans", sans-serif; }
.hscroll { height: 17px; flex: none; display: flex; align-items: center; background: #f0f0f0; }
.hthumb { flex: none; width: 125px; height: 15px; margin: 0 0 0 2px; background: linear-gradient(180deg, #f6f6f6, #d8d8d8); border: 1px solid #aaa; border-radius: 2px; text-align: center; font: 9px/13px "Liberation Sans", sans-serif; color: #666; }
.hgrip { flex: 1; }
```
